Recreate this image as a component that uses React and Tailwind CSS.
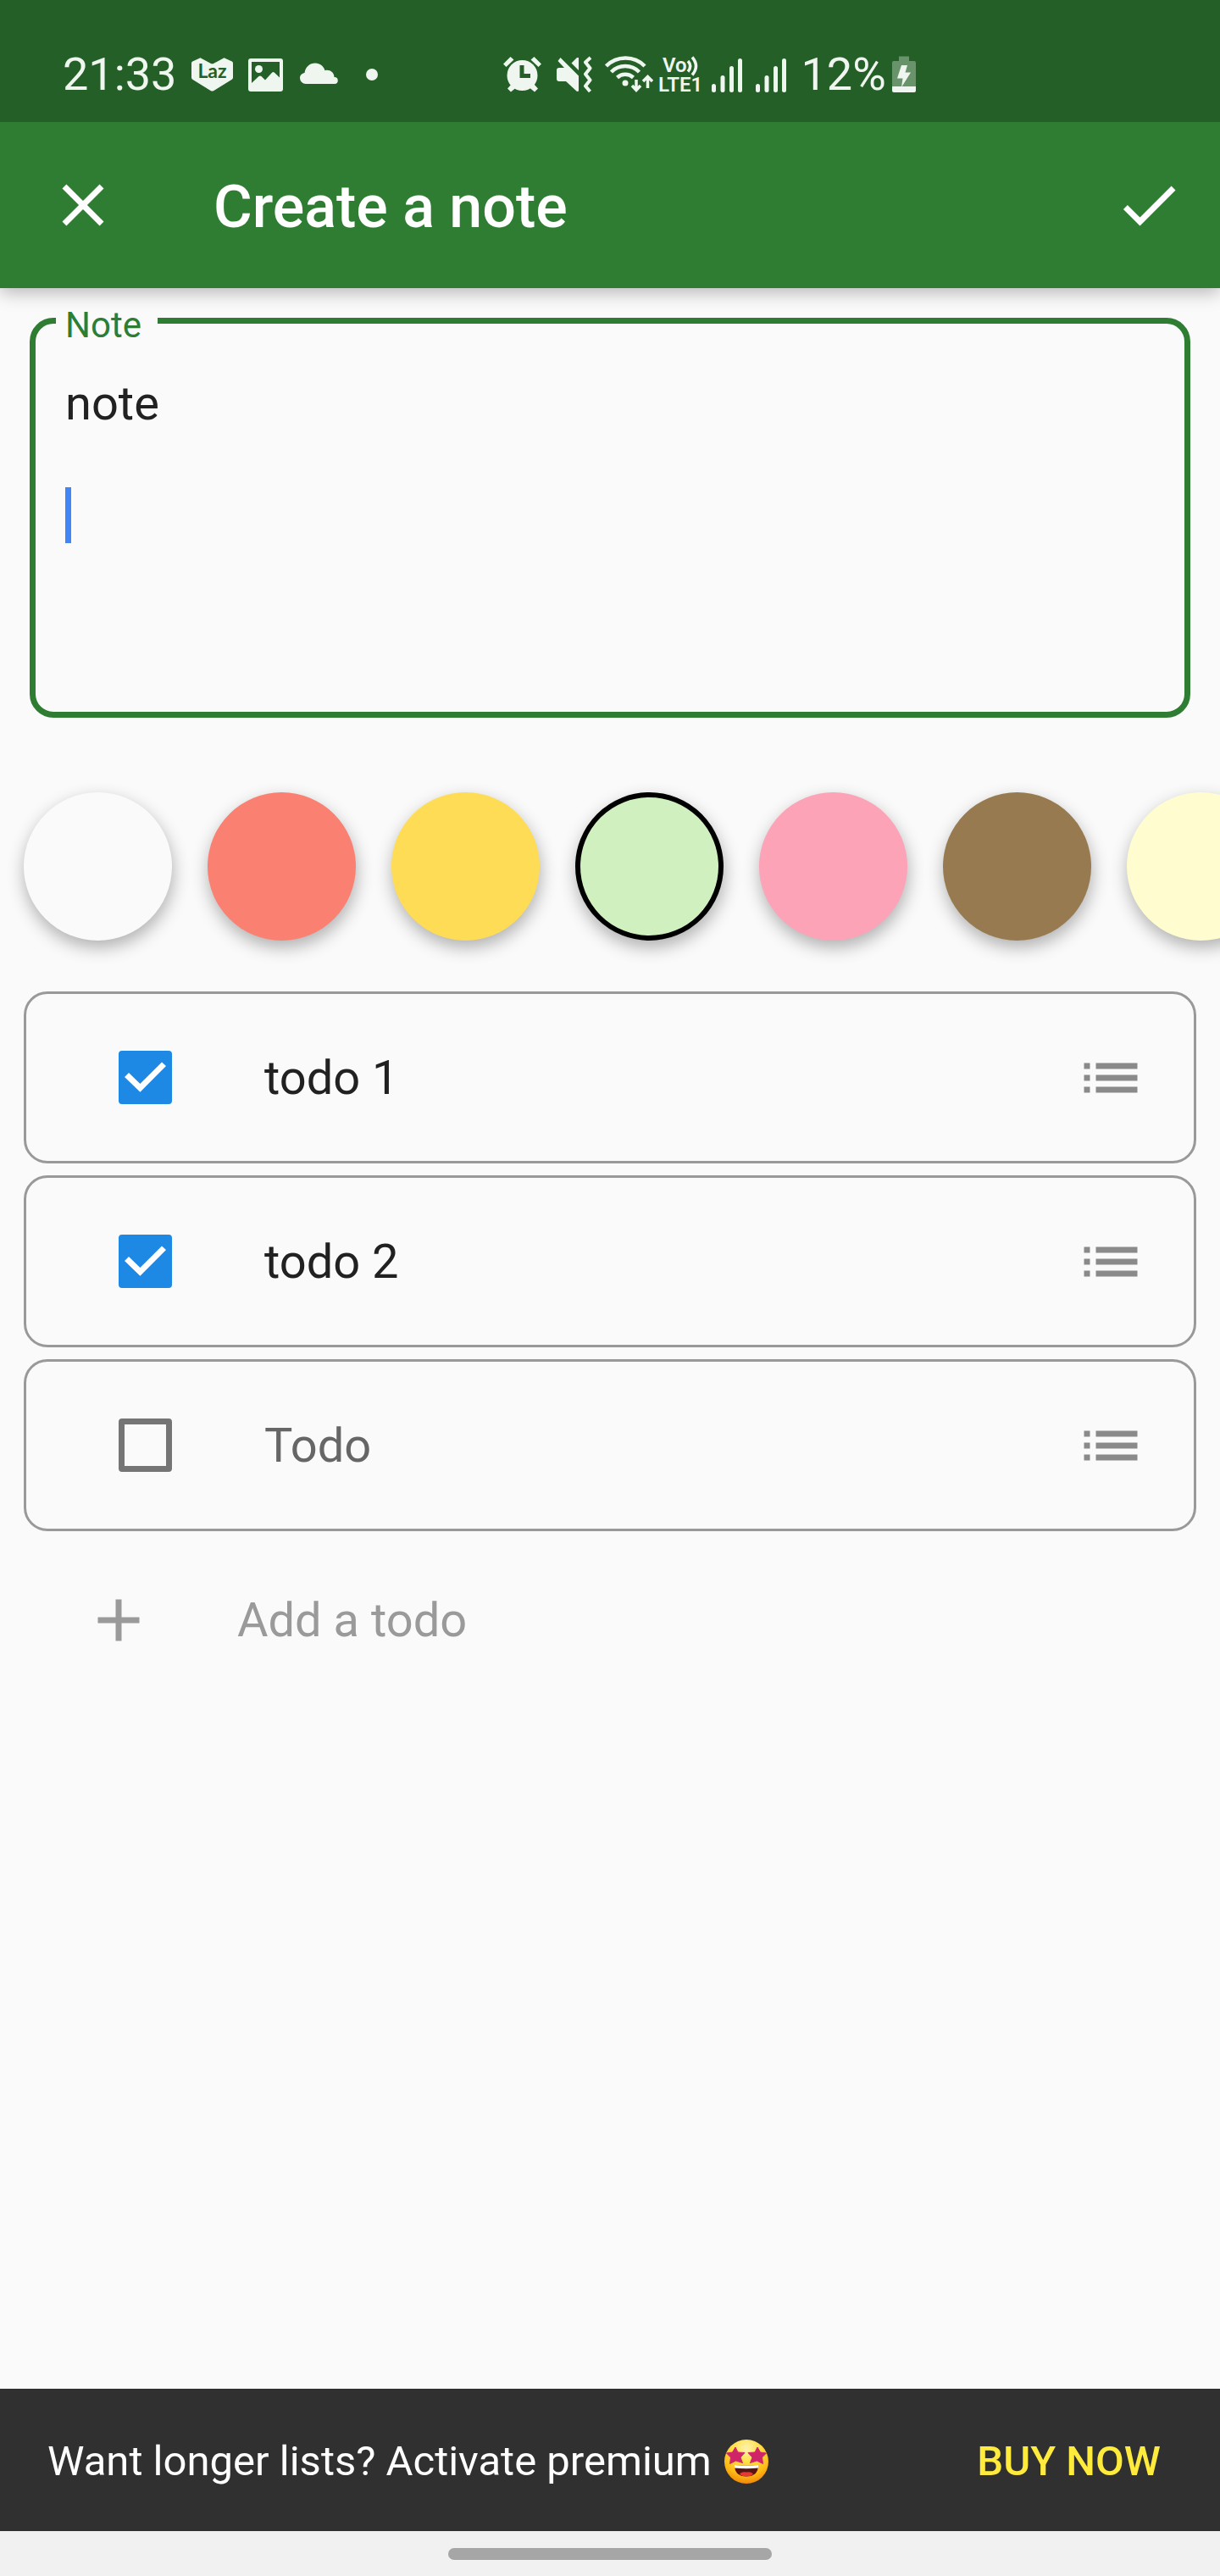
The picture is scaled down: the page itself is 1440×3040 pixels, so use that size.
import { useState } from "react";

const COLORS = [
  { name: "Default", bg: "bg-[#fafafa]" },
  { name: "Salmon", bg: "bg-[#fa8072]" },
  { name: "Mustard", bg: "bg-[#fedc56]" },
  { name: "Tea green", bg: "bg-[#d0f0c0]" },
  { name: "Flamingo", bg: "bg-[#fca3b7]" },
  { name: "Brown", bg: "bg-[#987a50]" },
  { name: "Cream", bg: "bg-[#fffdd0]" },
];

const TODOS = [
  { id: 1, text: "todo 1", done: true },
  { id: 2, text: "todo 2", done: true },
  { id: 3, text: "", done: false },
];

function Signal() {
  return (
    <svg width="36" height="44" viewBox="0 0 36 44" fill="currentColor" aria-hidden="true">
      <rect x="0" y="33" width="5" height="10" rx="2.5" />
      <rect x="10.5" y="23" width="5" height="20" rx="2.5" />
      <rect x="21" y="12" width="5" height="31" rx="2.5" />
      <rect x="31" y="3" width="5" height="40" rx="2.5" />
    </svg>
  );
}

function StatusBar() {
  return (
    <div className="z-20 flex h-36 shrink-0 items-center bg-[#235f26] pt-8 pl-[74px] text-[#eff5ef]">
      <span className="text-[54px] leading-[44px]">21:33</span>
      <svg className="ml-[18px]" width="49" height="44" viewBox="0 0 49 44" aria-hidden="true">
        <path
          d="M0 8.5Q0 7.200 1.200 6.500L10.500 2.200 22.500 8.700Q24.500 9.700 26.500 8.700L38.500 2.200 47.800 6.500Q49 7.200 49 8.500V25.500Q49 27 47.800 27.800L26 41.200Q24.500 42 23 41.200L1.200 27.800Q0 27 0 25.500Z"
          fill="currentColor"
        />
        <text x="24.500" y="26" textAnchor="middle" fontFamily="Lato, sans-serif" fontWeight="700" fontSize="23" fill="#235f26">
          Laz
        </text>
      </svg>
      <svg className="ml-[18px]" width="41" height="44" viewBox="0 0 41 44" fill="currentColor" aria-hidden="true">
        <path
          fillRule="evenodd"
          d="M3 3H38Q41 3 41 6V39Q41 42 38 42H3Q0 42 0 39V6Q0 3 3 3ZM4 7V32L12.500 24Q14 23 15.500 24L20 28.500 28 19.700Q29.500 18.500 31 19.700L37 25.500V7Z"
        />
        <circle cx="12.500" cy="15.500" r="4.500" />
      </svg>
      <svg className="ml-5" width="45" height="44" viewBox="0 0 45 44" fill="currentColor" aria-hidden="true">
        <path d="M7 33A7 7 0 0 1 0 26C0 22.500 2.500 20.500 5.500 20C6.500 13 11.500 8.500 18 8.500C24 8.500 28 12 29.500 17.200C35 15.800 40.200 19 40.500 25A4 4 0 0 1 41 33Z" />
      </svg>
      <span className="ml-[33px] size-3.5 rounded-full bg-current" />

      <svg className="ml-[148px]" width="46" height="44" viewBox="0 0 46 44" fill="currentColor" aria-hidden="true">
        <path d="M0 9.500 8.500 1 12.500 4.500 3.500 13ZM45 9.500 36.500 1 32.500 4.500 41.500 13Z" />
        <path d="M5 38.500 10 33 15 37.500 9 42.500ZM41 38.500 36 33 31 37.500 37 42.500Z" />
        <circle cx="22.500" cy="23" r="18" />
        <path d="M19.500 11H24.500V21H32V26H19.500Z" fill="#235f26" />
      </svg>
      <svg className="ml-4" width="43" height="44" viewBox="0 0 43 44" fill="currentColor" aria-hidden="true">
        <path d="M5.500 2 27 23.500V41.500L25 42 12 30H4Q1 30 1 27V17Q1 14 4 14H10L2.500 6Z" />
        <path d="M18.500 8.500 25 2H27V17Z" />
        <path
          d="M41 2 35 7.500 40.500 14.500 35 21.500 40.500 28.500 35 35.500 40.500 42"
          fill="none"
          stroke="currentColor"
          strokeWidth="4"
          strokeLinejoin="round"
        />
      </svg>
      <svg className="ml-[15px]" width="57" height="44" viewBox="0 0 57 44" aria-hidden="true">
        <g fill="none" stroke="currentColor" strokeWidth="4.500">
          <path d="M1.500 12A32 32 0 0 1 47 12" />
          <path d="M7.500 19A23 23 0 0 1 40.500 19" />
          <path d="M14.500 25.500A14 14 0 0 1 33.500 25.500" />
        </g>
        <circle cx="24" cy="32" r="3.500" fill="currentColor" />
        <g fill="none" stroke="currentColor" strokeWidth="3.500">
          <path d="M37 28V40M32 35 37 40.500 42 35" />
          <path d="M50.500 38V25M45 30 50.500 24.500 56 30" />
        </g>
      </svg>
      <svg className="ml-[7px] overflow-visible" width="52" height="44" viewBox="0 0 52 44" fill="currentColor" aria-hidden="true">
        <g fontFamily="Roboto, sans-serif" fontWeight="600">
          <text x="4" y="18.500" fontSize="24">Vo</text>
          <text x="-1" y="42" fontSize="24">LTE1</text>
        </g>
        <g fill="none" stroke="currentColor" strokeWidth="3.500">
          <path d="M34 6Q39.500 12 34 18.500" />
          <path d="M39 1.500Q48 12 39 22.500" />
        </g>
      </svg>
      <span className="ml-2.5"><Signal /></span>
      <span className="ml-4"><Signal /></span>
      <span className="ml-[17px] text-[54px] leading-[44px]">12%</span>
      <svg className="ml-[7px]" width="28" height="44" viewBox="0 0 28 44" fill="currentColor" aria-hidden="true">
        <path opacity="0.350" d="M8 0.500H20V6H26Q28 6 28 8V36H0V8Q0 6 2 6H8Z" />
        <path d="M0 36H28V41Q28 43 26 43H2Q0 43 0 41Z" />
        <path d="M11 11H18L15.500 19.500H22L11 37 12.500 26.500H6Z" />
      </svg>
    </div>
  );
}

function StarEyesFace() {
  return (
    <svg className="inline-block size-[54px] shrink-0" viewBox="0 0 54 54" role="img" aria-label="star-struck">
      <defs>
        <radialGradient id="face" cx="0.500" cy="0.200" r="0.850">
          <stop offset="0" stopColor="#fff3b0" />
          <stop offset="0.350" stopColor="#ffe04a" />
          <stop offset="0.720" stopColor="#fdb813" />
          <stop offset="1" stopColor="#ee7a0a" />
        </radialGradient>
      </defs>
      <circle cx="27" cy="27" r="26" fill="url(#face)" />
      <path d="M14 10 17 16 25 16.500 20 22 22.500 28.500 14.500 26 7.500 29.500 8.500 22 3.500 17 10.500 16Z" fill="#d02468" stroke="#d02468" strokeWidth="1" strokeLinejoin="round" />
      <path d="M40 10 37 16 29 16.500 34 22 31.500 28.500 39.500 26 46.500 29.500 45.500 22 50.500 17 43.500 16Z" fill="#d02468" stroke="#d02468" strokeWidth="1" strokeLinejoin="round" />
      <path d="M13 31Q27 32.500 41 31Q41 44.500 27 44.500Q13 44.500 13 31Z" fill="#5a1410" />
      <path d="M13 31Q27 32.500 41 31V34.500Q27 36 13 34.500Z" fill="#fff" />
      <path d="M19 42Q21 38.500 27 39.500Q33 38.500 35 42Q31.500 44.500 27 44.500Q22.500 44.500 19 42Z" fill="#e53935" />
    </svg>
  );
}

function TodoRow({ todo, onToggle, onEdit }) {
  return (
    <li className="flex h-[203px] items-center rounded-[28px] border-3 border-[#999999] pr-14 pl-[109px]">
      <span className="relative size-[63px] shrink-0">
        <input
          type="checkbox"
          aria-label={`Done: ${todo.text || "new todo"}`}
          checked={todo.done}
          onChange={onToggle}
          className="block size-full appearance-none rounded-[4px] border-7 border-[#757575] checked:border-[#1e88e5] checked:bg-[#1e88e5]"
        />
        {todo.done && (
          <svg className="pointer-events-none absolute inset-0" viewBox="0 0 63 63" fill="#fff" aria-hidden="true">
            <path d="M7 31 12 26 25.400 39 51 13.500 56 18 25.400 48.700Z" />
          </svg>
        )}
      </span>
      <input
        type="text"
        aria-label="Todo text"
        placeholder="Todo"
        value={todo.text}
        onChange={(e) => onEdit(e.target.value)}
        className="ml-[109px] h-[66px] min-w-0 flex-1 text-[56px] leading-[66px] text-[#212121] outline-none placeholder:text-[#666666]"
      />
      <button type="button" aria-label="Reorder" className="shrink-0 text-[#8a8a8a]">
        <svg className="size-[84px]" viewBox="0 0 24 24" fill="currentColor" aria-hidden="true">
          <path d="M3 13h2v-2H3v2zm0 4h2v-2H3v2zm0-8h2V7H3v2zm4 4h14v-2H7v2zm0 4h14v-2H7v2zM7 7v2h14V7H7z" />
        </svg>
      </button>
    </li>
  );
}

export default function App() {
  const [note, setNote] = useState("note\n\n");
  const [color, setColor] = useState("Tea green");
  const [todos, setTodos] = useState(TODOS);
  const update = (id, patch) =>
    setTodos((list) => list.map((t) => (t.id === id ? { ...t, ...patch } : t)));

  return (
    <div className="flex min-h-screen flex-col bg-[#fafafa] font-[Roboto,sans-serif]">
      <StatusBar />

      <header className="z-10 flex h-[196px] shrink-0 items-center bg-[#2e7d32] pr-[42px] pl-14 text-white shadow-[0_5px_20px_rgba(0,0,0,0.28)]">
        <button type="button" aria-label="Close">
          <svg className="size-[84px]" viewBox="0 0 24 24" fill="currentColor" aria-hidden="true">
            <path d="M19 6.410 17.590 5 12 10.590 6.410 5 5 6.410 10.590 12 5 17.590 6.410 19 12 13.410 17.590 19 19 17.590 13.410 12z" />
          </svg>
        </button>
        <h1 className="ml-28 flex-1 pt-1 text-[70px] leading-[82px] font-medium">Create a note</h1>
        <button type="button" aria-label="Save">
          <svg className="size-[84px]" viewBox="0 0 24 24" fill="currentColor" aria-hidden="true">
            <path d="M9 16.170 4.830 12l-1.420 1.410L9 19 21 7l-1.410-1.410z" />
          </svg>
        </button>
      </header>

      <main className="flex flex-1 flex-col pt-[35px]">
        <div className="relative mx-[35px] rounded-[28px] border-7 border-[#2e7d32] px-[35px] pt-[61px] pb-[67px]">
          <label
            htmlFor="note"
            className="absolute -top-[23px] left-6 bg-[#fafafa] pr-[19px] pl-[11px] text-[42px] leading-[49px] text-[#2e7d32]"
          >
            Note
          </label>
          <textarea
            id="note"
            rows={5}
            value={note}
            onChange={(e) => setNote(e.target.value)}
            className="block w-full resize-none overflow-hidden text-[56px] leading-[66px] text-[#212121] caret-transparent outline-none"
          />
          <span className="absolute top-[193px] left-[35px] h-[66px] w-[7px] bg-[#4285f4]" />
        </div>

        <div
          role="radiogroup"
          aria-label="Note color"
          className="mt-[58px] flex gap-[42px] overflow-x-auto px-7 py-[30px] [scrollbar-width:none]"
        >
          {COLORS.map((c) => (
            <input
              key={c.name}
              type="radio"
              name="color"
              aria-label={c.name}
              checked={color === c.name}
              onChange={() => setColor(c.name)}
              className={`size-[175px] shrink-0 appearance-none rounded-full border-black shadow-[1px_8px_20px_rgba(0,0,0,0.3)] checked:border-6 ${c.bg}`}
            />
          ))}
        </div>

        <ul className="mx-7 mt-[30px] flex flex-col gap-3.5">
          {todos.map((t) => (
            <TodoRow
              key={t.id}
              todo={t}
              onToggle={() => update(t.id, { done: !t.done })}
              onEdit={(text) => update(t.id, { text })}
            />
          ))}
        </ul>

        <button
          type="button"
          onClick={() => setTodos((list) => [...list, { id: Date.now(), text: "", done: false }])}
          className="flex h-[210px] items-center pl-[98px] text-[56px] leading-[66px] text-[#9a9a9a]"
        >
          <svg className="size-[84px]" viewBox="0 0 24 24" fill="currentColor" aria-hidden="true">
            <path d="M19 13h-6v6h-2v-6H5v-2h6V5h2v6h6v2z" />
          </svg>
          <span className="ml-[98px]">Add a todo</span>
        </button>
      </main>

      <div className="flex h-[168px] shrink-0 items-center justify-between bg-[#303030] pt-1 pr-[70px] pl-14">
        <p className="flex items-center gap-3.5 text-[49px] leading-[58px] text-white">
          Want longer lists? Activate premium
          <StarEyesFace />
        </p>
        <button type="button" className="text-[49px] leading-[58px] font-medium text-[#ffeb3b]">
          BUY NOW
        </button>
      </div>

      <div className="flex h-[53px] shrink-0 items-center justify-center bg-[#f1f1f1]">
        <span className="h-3.5 w-[382px] rounded-full bg-[#a6a6a6]" />
      </div>
    </div>
  );
}
